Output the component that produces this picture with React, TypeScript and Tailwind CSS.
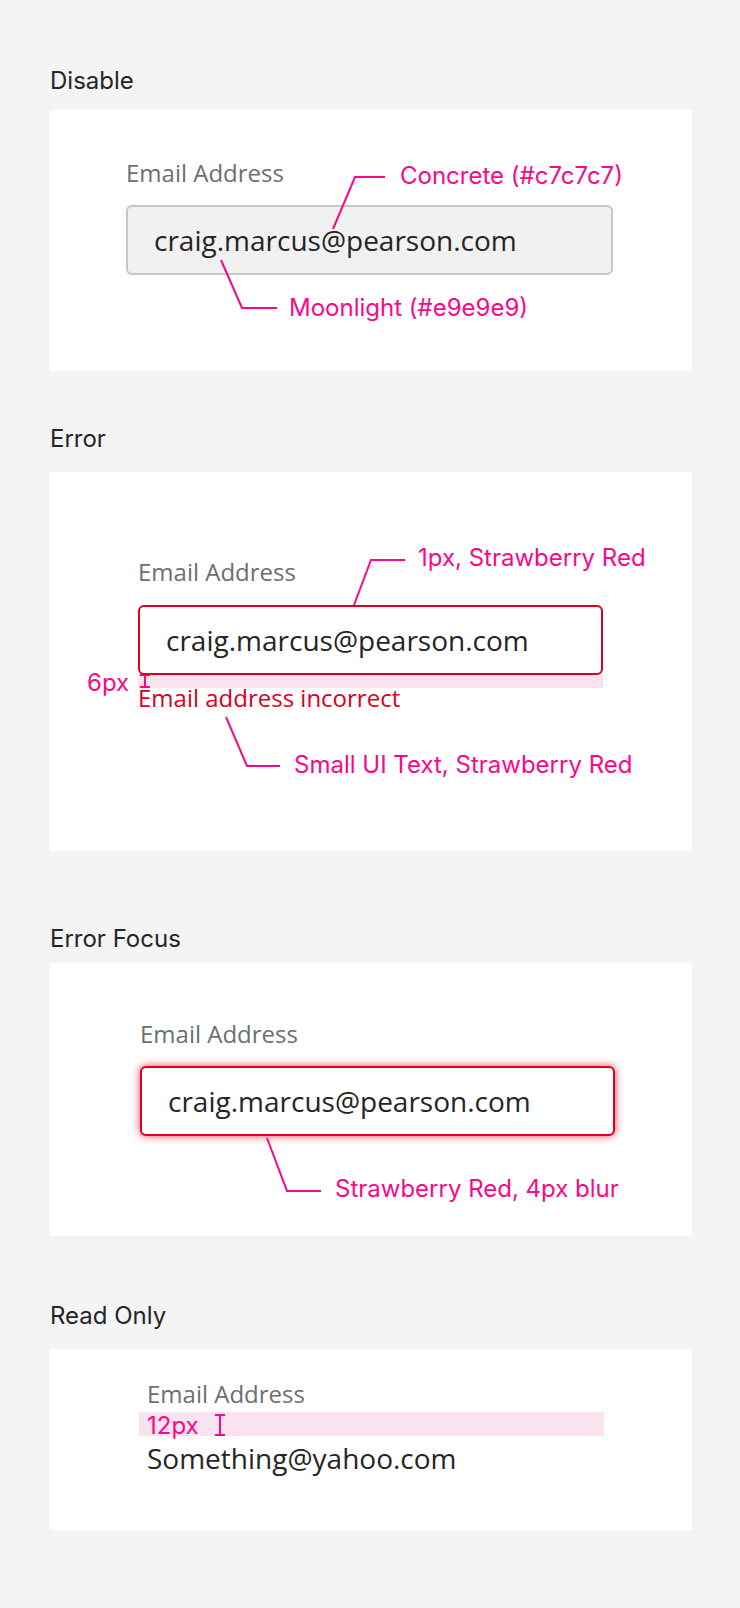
import React from "react";

// Spec sheet for the text input states: disabled, error, error focus, read only

const heading =
  "font-['Inter',sans-serif] text-[24px] leading-[24px] text-[#252525]";
const label =
  "font-['Open_Sans',sans-serif] text-[24px] leading-[32px] text-[#6a7070]";
const value = "font-['Open_Sans',sans-serif] text-[28px] text-[#252525]";
const note =
  "absolute whitespace-nowrap font-['Inter',sans-serif] text-[24px] leading-[30px] text-[#f9088a]";

const Leaders = ({ lines }: { lines: string[] }) => (
  <svg
    className="pointer-events-none absolute inset-0 h-full w-full"
    fill="none"
  >
    {lines.map((p) => (
      <polyline key={p} points={p} stroke="#f9088a" strokeWidth={2} />
    ))}
  </svg>
);

// small dimension marker (the I shaped bracket)
const Marker = ({ className, h }: { className: string; h: number }) => (
  <svg className={`absolute ${className}`} width={12} height={h} fill="none">
    <path
      d={`M1 1H11M6 1V${h - 1}M1 ${h - 1}H11`}
      stroke="#f9088a"
      strokeWidth={2}
    />
  </svg>
);

export default function App() {
  return (
    <div className="flex min-h-screen flex-col bg-[#f4f4f4] pl-[50px] pr-[48px] pt-[69px] pb-[78px]">
      {/* Disable */}
      <h2 className={heading}>Disable</h2>
      <div className="relative mt-[17px] flex flex-col items-start bg-white pl-[76px] pt-[47px] pb-[96px]">
        <div className={label}>Email Address</div>
        <div
          className={`${value} mt-[16px] flex h-[70px] w-[487px] items-center rounded-[6px] border-2 border-[#c7c7c7] bg-[#f1f1f1] pl-[26px]`}
        >
          craig.marcus@pearson.com
        </div>
        <Leaders
          lines={["283,119 305,67 335,67", "171,150 192,198 227,198"]}
        />
        <span className={`${note} left-[350px] top-[51px]`}>
          Concrete (#c7c7c7)
        </span>
        <span className={`${note} left-[239px] top-[183px]`}>
          Moonlight (#e9e9e9)
        </span>
      </div>

      {/* Error */}
      <h2 className={`${heading} mt-[56px]`}>Error</h2>
      <div className="relative mt-[21px] flex flex-col items-start bg-white pl-[88px] pt-[84px] pb-[137px]">
        <div className={label}>Email Address</div>
        <div
          className={`${value} relative z-10 mt-[17px] flex h-[70px] w-[465px] items-center rounded-[6px] border-2 border-[#db0020] bg-white pl-[26px]`}
        >
          craig.marcus@pearson.com
        </div>
        <div className="absolute left-[88px] top-[202px] h-[14px] w-[465px] bg-[#fae3ef]" />
        <div className="relative mt-[7px] font-['Open_Sans',sans-serif] text-[24px] leading-[32px] text-[#db0020]">
          Email address incorrect
        </div>
        <Marker className="left-[89px] top-[202px]" h={14} />
        <Leaders
          lines={["304,133 321,88 355,88", "176,245 197,294 230,294"]}
        />
        <span className={`${note} left-[368px] top-[71px]`}>
          1px, Strawberry Red
        </span>
        <span className={`${note} left-[37px] top-[196px]`}>6px</span>
        <span className={`${note} left-[244px] top-[278px]`}>
          Small UI Text, Strawberry Red
        </span>
      </div>

      {/* Error Focus */}
      <h2 className={`${heading} mt-[76px]`}>Error Focus</h2>
      <div className="relative mt-[12px] flex flex-col items-start bg-white pl-[90px] pt-[55px] pb-[100px]">
        <div className={label}>Email Address</div>
        <div
          className={`${value} mt-[16px] flex h-[70px] w-[475px] items-center rounded-[6px] border-2 border-[#db0020] bg-white pl-[26px] shadow-[0_0_9px_rgba(219,0,32,0.75)]`}
        >
          craig.marcus@pearson.com
        </div>
        <Leaders lines={["217,175 237,228 271,228"]} />
        <span className={`${note} left-[285px] top-[211px]`}>
          Strawberry Red, 4px blur
        </span>
      </div>

      {/* Read Only */}
      <h2 className={`${heading} mt-[68px]`}>Read Only</h2>
      <div className="relative mt-[21px] flex flex-col items-start bg-white pl-[97px] pt-[29px] pb-[52px]">
        <div className="absolute left-[89px] top-[63px] h-[24px] w-[465px] bg-[#fae3ef]" />
        <div className={`${label} relative`}>Email Address</div>
        <div className={`${value} relative mt-[28px] leading-[40px]`}>
          Something@yahoo.com
        </div>
        <span className={`${note} left-[97px] top-[62px]`}>12px</span>
        <Marker className="left-[164px] top-[65px]" h={22} />
      </div>
    </div>
  );
}
